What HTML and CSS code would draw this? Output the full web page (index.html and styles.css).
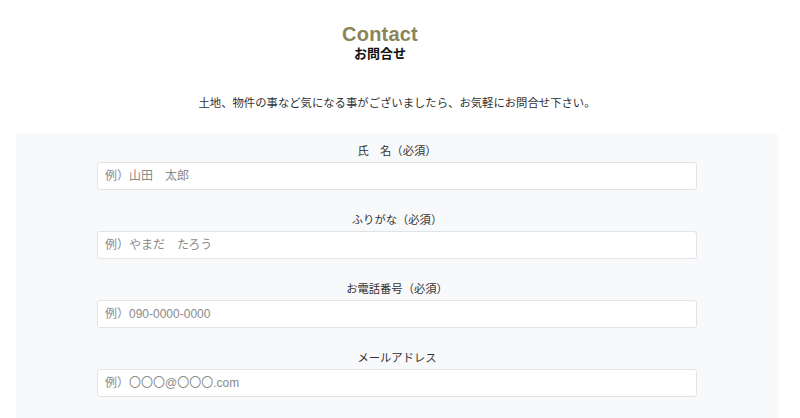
FILE: index.html
```html
<!DOCTYPE html>
<html lang="ja">
<head>
<meta charset="utf-8">
<title>Contact</title>
<link rel="stylesheet" href="styles.css">
</head>
<body>
<div class="page">
  <header class="heading">
    <h1 class="heading-en">Contact</h1>
    <p class="heading-ja">お問合せ</p>
  </header>
  <p class="lead">土地、物件の事など気になる事がございましたら、お気軽にお問合せ下さい。</p>
  <section class="form-area">
    <form class="form">
      <div class="field">
        <label class="field-label" for="name">氏　名（必須）</label>
        <input class="field-input" id="name" type="text" placeholder="例）山田　太郎">
      </div>
      <div class="field">
        <label class="field-label" for="kana">ふりがな（必須）</label>
        <input class="field-input" id="kana" type="text" placeholder="例）やまだ　たろう">
      </div>
      <div class="field">
        <label class="field-label" for="tel">お電話番号（必須）</label>
        <input class="field-input" id="tel" type="text" placeholder="例）090-0000-0000">
      </div>
      <div class="field">
        <label class="field-label" for="mail">メールアドレス</label>
        <input class="field-input" id="mail" type="text" placeholder="例）〇〇〇@〇〇〇.com">
      </div>
    </form>
  </section>
</div>
</body>
</html>
```

FILE: styles.css
```css
* { box-sizing: border-box; }
html, body { margin: 0; padding: 0; background: #ffffff; }
body {
  font-family: "Liberation Sans", "Noto Sans CJK JP", sans-serif;
  color: #333333;
  overflow: hidden;
}
.page {
  padding: 0 22px 0 16px;
}
.heading {
  text-align: center;
  padding-top: 23px;
  margin-right: 34px;
}
.heading-en {
  margin: 0;
  font-size: 20px;
  line-height: 23px;
  font-weight: bold;
  color: #8a8459;
  letter-spacing: 0.2px;
}
.heading-ja {
  margin: 0;
  font-size: 13px;
  line-height: 15px;
  font-weight: bold;
  color: #111111;
  font-family: "Liberation Sans", "Noto Sans CJK JP", sans-serif;
}
.lead {
  margin: 31px 0 0;
  text-align: center;
  font-size: 11.35px;
  line-height: 20px;
  color: #2f3136;
  font-family: "Noto Sans CJK JP", sans-serif;
}
.form-area {
  margin-top: 22px;
  background: #f8f9fb;
  padding: 6px 0 30px;
}
.form {
  width: 600px;
  margin: 0 auto;
  display: flex;
  flex-direction: column;
  gap: 19px;
}
.field {
  display: flex;
  flex-direction: column;
  gap: 2px;
}
.field-label {
  text-align: center;
  font-size: 11.3px;
  line-height: 20px;
  color: #333333;
  font-family: "Noto Sans CJK JP", sans-serif;
}
.field-input {
  display: block;
  width: 100%;
  height: 28px;
  margin: 0;
  padding: 0 7px;
  border: 1px solid #e2e3e5;
  border-radius: 3px;
  background: #ffffff;
  font-family: "Liberation Sans", "Noto Sans CJK JP", sans-serif;
  font-size: 12px;
  color: #333333;
  outline: none;
}
.field-input::placeholder {
  color: #8a8a8a;
  opacity: 1;
}
```
